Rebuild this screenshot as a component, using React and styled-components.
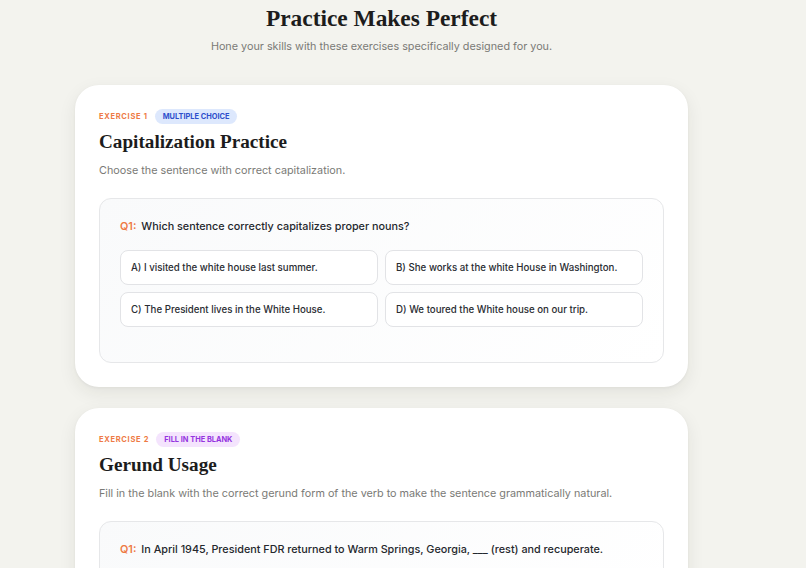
import React from 'react'
import styled, { createGlobalStyle } from 'styled-components'

const Global = createGlobalStyle`
  html, body {
    margin: 0;
    padding: 0;
    background: #f3f3ee;
  }
  body {
    font-family: Inter, "Noto Sans", sans-serif;
    color: #1f2328;
  }
`

const serif = `"Liberation Serif", "DejaVu Serif", serif`

const Page = styled.main`
  width: 613px;
  margin-left: 75px;
  padding-top: 4px;
`

const Header = styled.header`
  text-align: center;
  margin-bottom: 30px;
`

const Title = styled.h1`
  font-family: ${serif};
  font-weight: 700;
  font-size: 23.4px;
  line-height: 28px;
  margin: 0 0 7px;
  color: #1c1c1c;
`

const Subtitle = styled.p`
  margin: 0;
  font-size: 10.8px;
  line-height: 16px;
  color: #7a7a76;
`

const Card = styled.section`
  background: #fff;
  border-radius: 24px;
  box-shadow: 0 6px 18px rgba(40, 40, 30, 0.08), 0 1px 3px rgba(40, 40, 30, 0.05);
  padding: 23px 24px 24px;
  margin-bottom: 21px;
`

const Meta = styled.div`
  display: flex;
  align-items: center;
  gap: 7px;
  height: 16px;
`

const ExerciseLabel = styled.span`
  font-size: 7.5px;
  font-weight: 700;
  letter-spacing: 0.7px;
  color: #ee7a45;
`

const Badge = styled.span`
  font-size: 7.4px;
  font-weight: 700;
  line-height: 15px;
  padding: 0 8px;
  border-radius: 8px;
  background: ${p => (p.$tone === 'purple' ? '#f4e4fd' : '#dde8fd')};
  color: ${p => (p.$tone === 'purple' ? '#9434e0' : '#2d4fcc')};
`

const CardTitle = styled.h2`
  font-family: ${serif};
  font-weight: 700;
  font-size: 19.2px;
  line-height: 26px;
  margin: 5px 0 8px;
  color: #1c1c1c;
`

const Description = styled.p`
  margin: 0 0 19px;
  font-size: 10.8px;
  line-height: 16px;
  color: #7a7a76;
`

const QuestionBox = styled.div`
  border: 1px solid #e6e7e9;
  border-radius: 12px;
  background: linear-gradient(135deg, #f9fafb 0%, #ffffff 100%);
  padding: 20px 20px 35px;
`

const Prompt = styled.p`
  margin: 0 0 15px;
  font-size: 10.8px;
  font-weight: 500;
  line-height: 16px;
  color: #25282d;
`

const QNum = styled.span`
  color: #ee7a45;
  font-weight: 600;
  margin-right: 5px;
`

const Options = styled.div`
  display: grid;
  grid-template-columns: 1fr 1fr;
  gap: 7px;
`

const Option = styled.button`
  all: unset;
  box-sizing: border-box;
  height: 35px;
  padding: 0 10px;
  background: #fff;
  border: 1px solid #e2e3e6;
  border-radius: 8px;
  font-family: Inter, "Noto Sans", sans-serif;
  font-size: 9.7px;
  font-weight: 500;
  color: #2a2d32;
  display: flex;
  align-items: center;
`

const exercises = [
  {
    n: 1,
    type: 'MULTIPLE CHOICE',
    tone: 'blue',
    title: 'Capitalization Practice',
    desc: 'Choose the sentence with correct capitalization.',
    question: 'Which sentence correctly capitalizes proper nouns?',
    options: [
      'A) I visited the white house last summer.',
      'B) She works at the white House in Washington.',
      'C) The President lives in the White House.',
      'D) We toured the White house on our trip.'
    ]
  },
  {
    n: 2,
    type: 'FILL IN THE BLANK',
    tone: 'purple',
    title: 'Gerund Usage',
    desc: 'Fill in the blank with the correct gerund form of the verb to make the sentence grammatically natural.',
    question: 'In April 1945, President FDR returned to Warm Springs, Georgia, ___ (rest) and recuperate.',
    options: []
  }
]

export default function App () {
  return (
    <>
      <Global />
      <Page>
        <Header>
          <Title>Practice Makes Perfect</Title>
          <Subtitle>Hone your skills with these exercises specifically designed for you.</Subtitle>
        </Header>
        {exercises.map(ex => (
          <Card key={ex.n}>
            <Meta>
              <ExerciseLabel>EXERCISE {ex.n}</ExerciseLabel>
              <Badge $tone={ex.tone}>{ex.type}</Badge>
            </Meta>
            <CardTitle>{ex.title}</CardTitle>
            <Description>{ex.desc}</Description>
            <QuestionBox>
              <Prompt><QNum>Q1:</QNum>{ex.question}</Prompt>
              {ex.options.length > 0 && (
                <Options>
                  {ex.options.map(o => <Option key={o}>{o}</Option>)}
                </Options>
              )}
            </QuestionBox>
          </Card>
        ))}
      </Page>
    </>
  )
}
